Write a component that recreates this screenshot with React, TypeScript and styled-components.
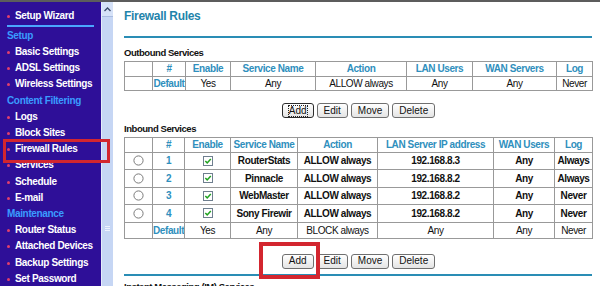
import React from "react";
import styled, { createGlobalStyle } from "styled-components";

// ---------- data ----------
type NavEntry = { kind: "item" | "section" | "divider"; label?: string; marked?: boolean };

const NAV: NavEntry[] = [
  { kind: "item", label: "Setup Wizard" },
  { kind: "divider" },
  { kind: "section", label: "Setup" },
  { kind: "item", label: "Basic Settings" },
  { kind: "item", label: "ADSL Settings" },
  { kind: "item", label: "Wireless Settings" },
  { kind: "section", label: "Content Filtering" },
  { kind: "item", label: "Logs" },
  { kind: "item", label: "Block Sites" },
  { kind: "item", label: "Firewall Rules", marked: true },
  { kind: "item", label: "Services" },
  { kind: "item", label: "Schedule" },
  { kind: "item", label: "E-mail" },
  { kind: "section", label: "Maintenance" },
  { kind: "item", label: "Router Status" },
  { kind: "item", label: "Attached Devices" },
  { kind: "item", label: "Backup Settings" },
  { kind: "item", label: "Set Password" },
];

const OUT_COLS = ["", "#", "Enable", "Service Name", "Action", "LAN Users", "WAN Servers", "Log"];
const OUT_WIDTHS = [28, 33, 45, 85, 91, 66, 84, 36];

const IN_COLS = ["", "#", "Enable", "Service Name", "Action", "LAN Server IP address", "WAN Users", "Log"];
const IN_WIDTHS = [28, 32, 46, 67, 80, 116, 61, 38];

const INBOUND = [
  { id: "1", name: "RouterStats", action: "ALLOW always", ip: "192.168.8.3", wan: "Any", log: "Always" },
  { id: "2", name: "Pinnacle", action: "ALLOW always", ip: "192.168.8.2", wan: "Any", log: "Always" },
  { id: "3", name: "WebMaster", action: "ALLOW always", ip: "192.168.8.2", wan: "Any", log: "Never" },
  { id: "4", name: "Sony Firewir", action: "ALLOW always", ip: "192.168.8.2", wan: "Any", log: "Never" },
];

// ---------- small drawings ----------
const CheckIcon = () => (
  <svg width="10" height="10" viewBox="0 0 10 10">
    <rect x="0.5" y="0.5" width="9" height="9" fill="#fff" stroke="#6f7f8f" />
    <path d="M2.3 5 L4.2 6.9 L7.8 2.9" fill="none" stroke="#21a321" strokeWidth="1.5" />
  </svg>
);

const RadioIcon = () => (
  <svg width="11" height="11" viewBox="0 0 11 11">
    <circle cx="5.5" cy="5.5" r="4.6" fill="#fff" stroke="#7a7a7a" />
  </svg>
);

const ButtonBar = ({ focused, gap }: { focused?: boolean; gap: number }) => (
  <StyledButtonRow $gap={gap}>
    <StyledButtonWrap>
      <StyledButton $focused={focused}>
        <StyledButtonLabel $focused={focused}>Add</StyledButtonLabel>
      </StyledButton>
      {!focused && <StyledHighlight $inset="-12px -6px -10px -23px" $thick={4} />}
    </StyledButtonWrap>
    <StyledButton>Edit</StyledButton>
    <StyledButton>Move</StyledButton>
    <StyledButton>Delete</StyledButton>
  </StyledButtonRow>
);

/**
 * Router admin page - firewall rules
 */
const App = () => {
  return (
    <>
      <GlobalStyle />
      <StyledPage>
        {/* Start menu */}
        <StyledSidebar>
          {NAV.map((entry, i) => {
            if (entry.kind === "divider") return <StyledDivider key={i} />;
            if (entry.kind === "section") return <StyledSection key={i}>{entry.label}</StyledSection>;
            return (
              <StyledNavItem key={i}>
                {entry.label}
                {entry.marked && <StyledHighlight $inset="-2px -9px -6px 3px" $thick={3} />}
              </StyledNavItem>
            );
          })}
        </StyledSidebar>
        <StyledScrollbar>
          <StyledScrollArrow>
            <svg width="7" height="5" viewBox="0 0 7 5">
              <path d="M0.5 4 L3.5 1 L6.5 4" fill="none" stroke="#3b4a6a" strokeWidth="1.3" />
            </svg>
          </StyledScrollArrow>
          <StyledGrip />
        </StyledScrollbar>
        {/* End menu */}

        {/* Start content */}
        <StyledContent>
          <StyledTitle>Firewall Rules</StyledTitle>
          <StyledRule />

          <StyledLabel $gap={9}>Outbound Services</StyledLabel>
          <StyledTable>
            <colgroup>
              {OUT_WIDTHS.map((w, i) => (
                <col key={i} style={{ width: w }} />
              ))}
            </colgroup>
            <tbody>
              <tr>
                {OUT_COLS.map((c, i) => (
                  <StyledHead key={i} $h={14}>
                    {c}
                  </StyledHead>
                ))}
              </tr>
              <tr>
                <StyledCell $h={13.5} />
                <StyledCell $h={13.5} $teal $bold>
                  Default
                </StyledCell>
                <StyledCell $h={13.5}>Yes</StyledCell>
                <StyledCell $h={13.5}>Any</StyledCell>
                <StyledCell $h={13.5}>ALLOW always</StyledCell>
                <StyledCell $h={13.5}>Any</StyledCell>
                <StyledCell $h={13.5}>Any</StyledCell>
                <StyledCell $h={13.5}>Never</StyledCell>
              </tr>
            </tbody>
          </StyledTable>

          <ButtonBar focused gap={12} />

          <StyledLabel $gap={5}>Inbound Services</StyledLabel>
          <StyledTable>
            <colgroup>
              {IN_WIDTHS.map((w, i) => (
                <col key={i} style={{ width: w }} />
              ))}
            </colgroup>
            <tbody>
              <tr>
                {IN_COLS.map((c, i) => (
                  <StyledHead key={i} $h={14}>
                    {c}
                  </StyledHead>
                ))}
              </tr>
              {INBOUND.map((r) => (
                <tr key={r.id}>
                  <StyledCell $h={16.5}>
                    <RadioIcon />
                  </StyledCell>
                  <StyledCell $h={16.5} $teal $bold>
                    {r.id}
                  </StyledCell>
                  <StyledCell $h={16.5}>
                    <CheckIcon />
                  </StyledCell>
                  <StyledCell $h={16.5} $bold>
                    {r.name}
                  </StyledCell>
                  <StyledCell $h={16.5} $bold>
                    {r.action}
                  </StyledCell>
                  <StyledCell $h={16.5} $bold>
                    {r.ip}
                  </StyledCell>
                  <StyledCell $h={16.5} $bold>
                    {r.wan}
                  </StyledCell>
                  <StyledCell $h={16.5} $bold>
                    {r.log}
                  </StyledCell>
                </tr>
              ))}
              <tr>
                <StyledCell $h={15} />
                <StyledCell $h={15} $teal $bold>
                  Default
                </StyledCell>
                <StyledCell $h={15}>Yes</StyledCell>
                <StyledCell $h={15}>Any</StyledCell>
                <StyledCell $h={15}>BLOCK always</StyledCell>
                <StyledCell $h={15}>Any</StyledCell>
                <StyledCell $h={15}>Any</StyledCell>
                <StyledCell $h={15}>Never</StyledCell>
              </tr>
            </tbody>
          </StyledTable>

          <ButtonBar gap={15} />
          <StyledRule $gap={5} />
          <StyledLabel $gap={5}>Instant Messaging (IM) Services</StyledLabel>
        </StyledContent>
        {/* End content */}
      </StyledPage>
    </>
  );
};

export default App;

// ========= Start Styled Elements ==========
const GlobalStyle = createGlobalStyle`
  html, body {
    margin: 0;
    padding: 0;
    background: #fff;
    overflow: hidden;
  }
  body {
    font-family: "Liberation Sans", Arial, sans-serif;
  }
`;

const StyledPage = styled.div`
  display: flex;
  width: 600px;
  height: 286px;
  overflow: hidden;
  border-top: 2px solid #5c5c5c;
  box-sizing: border-box;
`;

const StyledSidebar = styled.nav`
  position: relative;
  z-index: 3;
  flex: none;
  width: 101px;
  padding-top: 5.6px;
  background: #2e0f98;
  box-sizing: border-box;
`;

const StyledNavItem = styled.div`
  position: relative;
  height: 16.2px;
  line-height: 16.2px;
  padding-left: 15px;
  color: #fff;
  font-size: 10px;
  font-weight: bold;
  letter-spacing: -0.35px;
  white-space: nowrap;

  &::before {
    content: "";
    position: absolute;
    left: 7px;
    top: 7px;
    width: 3px;
    height: 3px;
    border-radius: 50%;
    background: #e23f6c;
  }
`;

const StyledSection = styled.div`
  height: 16.2px;
  line-height: 16.2px;
  padding-left: 7px;
  color: #3a9cff;
  font-size: 10px;
  font-weight: bold;
  letter-spacing: -0.35px;
  white-space: nowrap;
`;

const StyledDivider = styled.div`
  height: 4.1px;
  display: flex;
  align-items: center;
  padding: 0 7px;

  &::after {
    content: "";
    flex: 1;
    height: 1.5px;
    background: #4aa6ff;
  }
`;

const StyledScrollbar = styled.div`
  flex: none;
  width: 12px;
  display: flex;
  flex-direction: column;
  align-items: center;
  background: #c6d6f4;
  border-left: 1px solid #e4ecfb;
  box-sizing: border-box;
`;

const StyledScrollArrow = styled.div`
  width: 100%;
  height: 14px;
  display: flex;
  align-items: center;
  justify-content: center;
  border-bottom: 1px solid #a9bce0;
  background: #d6e2f8;
`;

const StyledGrip = styled.div`
  margin-top: 209px;
  width: 5px;
  height: 5px;
  background: repeating-linear-gradient(#eef3fd 0 1px, transparent 1px 2px);
`;

const StyledContent = styled.main`
  flex: 1;
  padding: 6px 8px 0 11px;
  min-width: 0;
`;

const StyledTitle = styled.h1`
  margin: 0;
  height: 16px;
  line-height: 16px;
  color: #1f84ab;
  font-size: 12px;
  font-weight: bold;
  letter-spacing: -0.3px;
`;

const StyledRule = styled.div<{ $gap?: number }>`
  margin-top: ${(p) => p.$gap ?? 12}px;
  height: 2px;
  background: #2a8db5;
`;

const StyledLabel = styled.div<{ $gap?: number }>`
  margin-top: ${(p) => p.$gap ?? 8}px;
  height: 12px;
  line-height: 12px;
  margin-bottom: 1.5px;
  color: #111;
  font-size: 9.5px;
  font-weight: bold;
  letter-spacing: -0.45px;
  white-space: nowrap;
`;

const StyledTable = styled.table`
  width: 469px;
  table-layout: fixed;
  border-collapse: collapse;
  border: 1px solid #8a8a8a;
`;

const StyledHead = styled.td<{ $h: number }>`
  height: ${(p) => p.$h}px;
  padding: 0;
  border: 1px solid #999;
  text-align: center;
  color: #2f8fbd;
  font-size: 10px;
  font-weight: bold;
  letter-spacing: -0.4px;
  white-space: nowrap;
  overflow: hidden;
`;

const StyledCell = styled.td<{ $h: number; $bold?: boolean; $teal?: boolean }>`
  height: ${(p) => p.$h}px;
  padding: 0;
  border: 1px solid #999;
  text-align: center;
  vertical-align: middle;
  color: ${(p) => (p.$teal ? "#2f8fbd" : "#111")};
  font-size: 10px;
  font-weight: ${(p) => (p.$bold ? "bold" : "normal")};
  letter-spacing: -0.4px;
  white-space: nowrap;
  overflow: hidden;

  svg {
    display: block;
    margin: 0 auto;
  }
`;

const StyledButtonRow = styled.div<{ $gap: number }>`
  display: flex;
  justify-content: center;
  gap: 3px;
  width: 469px;
  margin-top: ${(p) => p.$gap}px;
`;

const StyledButtonWrap = styled.div`
  position: relative;
  display: flex;
`;

const StyledButton = styled.button<{ $focused?: boolean }>`
  height: 15px;
  padding: 0 6px;
  display: flex;
  align-items: center;
  border: 1px solid ${(p) => (p.$focused ? "#2b2b2b" : "#6f6f6f")};
  border-radius: 3px;
  background: linear-gradient(#ffffff, #e4e4e4);
  color: #111;
  font-family: "Liberation Sans", Arial, sans-serif;
  font-size: 10px;
  line-height: 1;
`;

const StyledButtonLabel = styled.span<{ $focused?: boolean }>`
  outline: ${(p) => (p.$focused ? "1px dotted #222" : "none")};
  outline-offset: 0;
`;

const StyledHighlight = styled.span<{ $inset: string; $thick: number }>`
  position: absolute;
  inset: ${(p) => p.$inset};
  border: ${(p) => p.$thick}px solid #d3262f;
  pointer-events: none;
  z-index: 5;
`;
// ========= End Styled Elements ==========
